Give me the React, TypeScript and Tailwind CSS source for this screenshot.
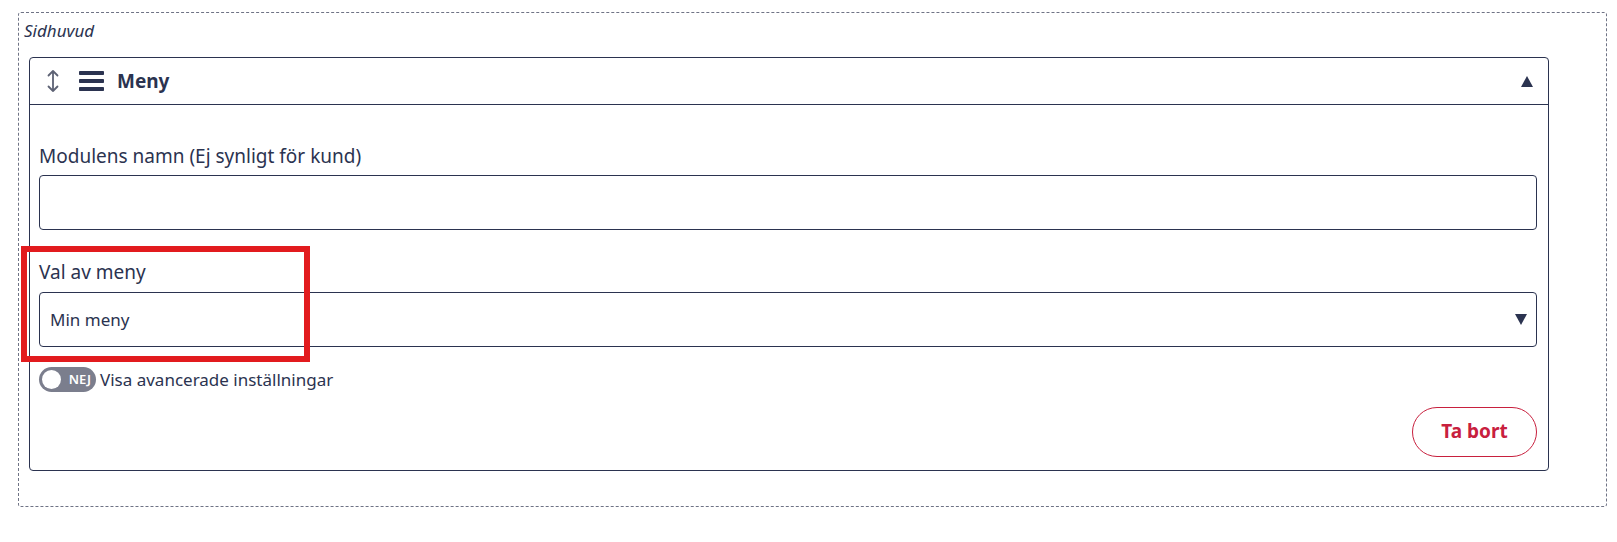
import { useState } from 'react';

export default function App() {
  const [advanced, setAdvanced] = useState(false);

  return (
    <div className="relative h-[542px] w-[1617px] bg-white pl-[18px] pt-[12px] font-['Noto_Sans',sans-serif] text-[#2b3350]">
      <div className="h-[495px] w-[1589px] rounded-[3px] border border-dashed border-[#6f7385] pt-[7px]">
        <p className="pl-[5px] text-[17px] italic leading-[22px] text-[#2b3350]">Sidhuvud</p>

        <div className="ml-[10px] mt-[15px] w-[1520px] rounded-[4px] border border-[#2b3350]">
          {/* header */}
          <div className="flex h-[47px] items-center border-b border-[#2b3350] pl-[16px] pr-[15px]">
            <svg width="14" height="24" viewBox="0 0 14 24" className="text-[#5d6274]" fill="none" stroke="currentColor" strokeWidth="1.8" strokeLinecap="round" strokeLinejoin="round">
              <path d="M7 2v20M2.5 6.5 7 2l4.5 4.5M2.5 17.5 7 22l4.5-4.5" />
            </svg>
            <svg width="25" height="20" viewBox="0 0 25 20" className="ml-[19px] text-[#2b3350]" fill="currentColor">
              <rect x="0" y="0" width="25" height="4" rx="0.8" />
              <rect x="0" y="8" width="25" height="4" rx="0.8" />
              <rect x="0" y="16" width="25" height="4" rx="0.8" />
            </svg>
            <span className="ml-[13px] text-[19px] font-bold">Meny</span>
            <span className="ml-auto mt-[1px] h-0 w-0 border-x-[6px] border-b-[11px] border-x-transparent border-b-[#2b3350]" />
          </div>

          {/* body */}
          <div className="pb-[13px] pl-[9px] pr-[11px] pt-[38px]">
            <label className="block text-[19px] leading-[27px]">Modulens namn (Ej synligt för kund)</label>
            <input className="mt-[5px] block h-[55px] w-full rounded-[4px] border border-[#2b3350] px-[10px] text-[17px] outline-none" />

            <label className="mt-[29px] block text-[19px] leading-[27px]">Val av meny</label>
            <div className="mt-[6px] flex h-[55px] w-full items-center rounded-[4px] border border-[#2b3350] pl-[10px] pr-[9px]">
              <span className="text-[17px]">Min meny</span>
              <span className="ml-auto h-0 w-0 border-x-[6px] border-t-[11px] border-x-transparent border-t-[#2b3350]" />
            </div>

            <div className="mt-[20px] flex items-center gap-[4px]">
              <button
                onClick={() => setAdvanced(!advanced)}
                className="flex h-[25px] w-[57px] items-center rounded-full bg-[#7b7e8d] pl-[3px] pr-[5px]"
              >
                <span className="h-[19px] w-[19px] rounded-full bg-white" />
                <span className="ml-auto text-[13px] font-semibold text-white">NEJ</span>
              </button>
              <span className="text-[17px]">Visa avancerade inställningar</span>
            </div>

            <div className="mt-[14px] flex justify-end">
              <button className="h-[50px] w-[125px] rounded-full border border-[#c8203e] text-[19px] font-bold text-[#c8203e]">
                Ta bort
              </button>
            </div>
          </div>
        </div>
      </div>

      {/* highlight overlay */}
      <div className="pointer-events-none absolute left-[21px] top-[246px] h-[116px] w-[289px] border-[6px] border-[#e21b1e]" />
    </div>
  );
}
